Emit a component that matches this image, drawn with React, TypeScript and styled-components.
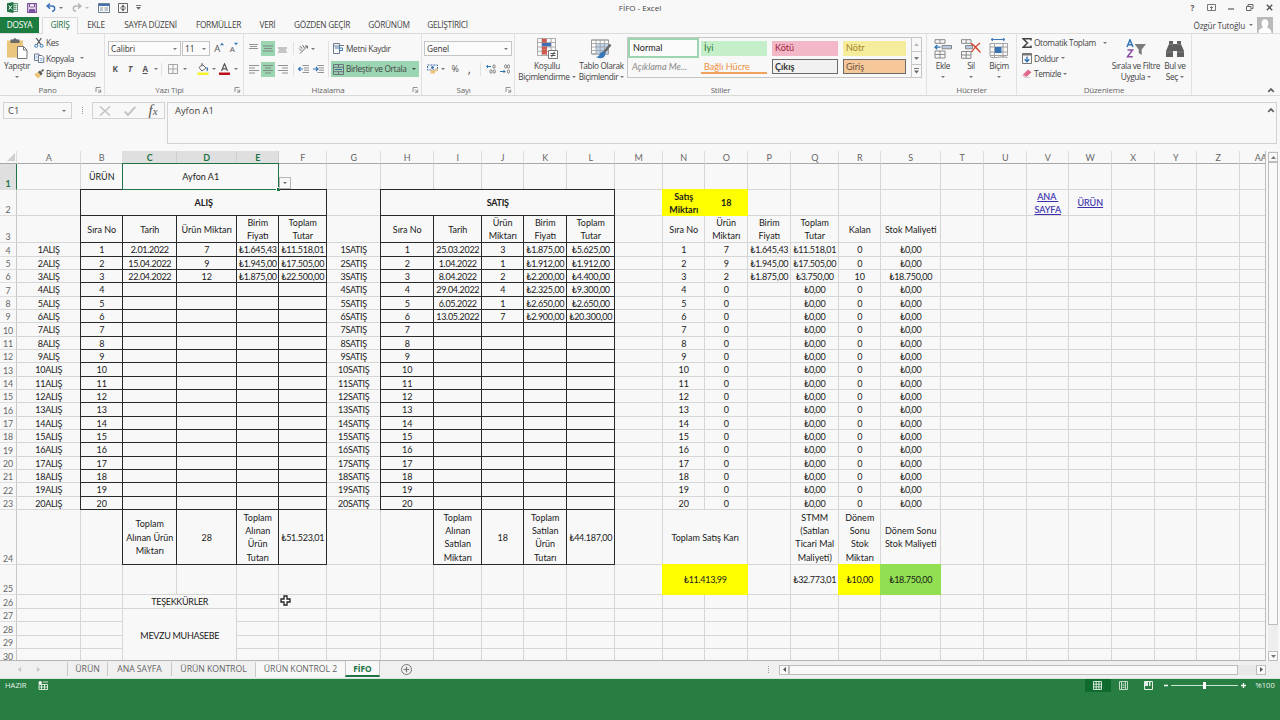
import React from "react";
import styled, { createGlobalStyle, css } from "styled-components";

const UI = `"Open Sans", "Noto Sans", sans-serif`;
const SHEET = `Lato, "Open Sans", sans-serif`;
const GREEN = "#217346";

const Global = createGlobalStyle`
  * { box-sizing: border-box; }
  body { margin: 0; background: #f8f8f8; overflow: hidden; }
  svg { display: block; flex: none; }
`;

const Window = styled.div`
  width: 1280px;
  height: 720px;
  display: flex;
  flex-direction: column;
  background: #f8f8f8;
  color: #444;
  font: 8px/11px ${UI};
  overflow: hidden;
  white-space: nowrap;
`;

/* ---------- shared ---------- */
const Slot = styled.div<{ $w: number; $h?: number; $on?: boolean }>`
  flex: none;
  width: ${(p) => p.$w}px;
  height: ${(p) => (p.$h ? `${p.$h}px` : "auto")};
  display: flex;
  align-items: center;
  justify-content: center;
  background: ${(p) => (p.$on ? "#9bd5b2" : "transparent")};
`;
const Caret = styled.i<{ $ml?: number; $c?: string }>`
  flex: none;
  width: 0;
  height: 0;
  margin-left: ${(p) => p.$ml ?? 0}px;
  border: 2px solid transparent;
  border-top-color: ${(p) => p.$c ?? "#777"};
  border-bottom-width: 0;
`;
const Rule = styled.i<{ $h: number }>`
  width: 1px;
  height: ${(p) => p.$h}px;
  background: #e1e1e1;
`;

/* ---------- title bar ---------- */
const TitleBar = styled.header`
  height: 17px;
  display: grid;
  grid-template-columns: 1fr auto 1fr;
  align-items: start;
`;
const TitleSide = styled.div<{ $end?: boolean }>`
  display: flex;
  height: 15px;
  align-items: center;
  justify-content: ${(p) => (p.$end ? "flex-end" : "flex-start")};
`;
const Title = styled.div`
  height: 16px;
  line-height: 16px;
  font-size: 8px;
`;

/* ---------- ribbon tabs ---------- */
const TabRow = styled.nav`
  height: 17px;
  display: flex;
  position: relative;
  margin-bottom: -1px;
  z-index: 1;
`;
const RibbonTab = styled.div<{ $w: number; $kind?: "file" | "active" }>`
  width: ${(p) => p.$w}px;
  height: 16px;
  display: flex;
  justify-content: center;
  line-height: 16px;
  font-size: 8.3px;
  letter-spacing: -0.3px;
  color: #444;
  ${(p) =>
    p.$kind === "file" &&
    css`
      background: #1d7d40;
      color: #fff;
      margin-right: 3px;
    `}
  ${(p) =>
    p.$kind === "active" &&
    css`
      height: 17px;
      background: #f9f9f9;
      border: 1px solid #dadada;
      border-bottom: 0;
      line-height: 14px;
      color: #217346;
    `}
`;
const Account = styled.div`
  margin-left: auto;
  display: flex;
  align-items: center;
  padding-right: 7px;
  height: 16px;
`;
const UserName = styled.span`
  font-size: 8.2px;
  letter-spacing: -0.2px;
`;

/* ---------- ribbon ---------- */
const Ribbon = styled.section`
  height: 63px;
  flex: none;
  display: flex;
  border-top: 1px solid #dcdcdc;
  border-bottom: 1px solid #d9d9d9;
  font-size: 8.3px;
  letter-spacing: -0.36px;
`;
const Group = styled.div<{ $w: number }>`
  width: ${(p) => p.$w}px;
  flex: none;
  display: flex;
  flex-direction: column;
  border-right: 1px solid #e1e1e1;
`;
const Body = styled.div<{ $pl?: number }>`
  height: 50px;
  display: flex;
  padding-left: ${(p) => p.$pl ?? 0}px;
`;
const Footer = styled.div`
  display: flex;
  align-items: center;
  height: 11px;
  font-size: 8px;
  letter-spacing: -0.2px;
  color: #666;
`;
const FooterName = styled.span`
  flex: 1;
  text-align: center;
`;
const Big = styled.div<{ $w: number; $ml?: number }>`
  width: ${(p) => p.$w}px;
  margin-left: ${(p) => p.$ml ?? 0}px;
  flex: none;
  padding-top: 3px;
  display: flex;
  flex-direction: column;
  align-items: center;
`;
const BigIcon = styled.div`
  height: 23px;
  display: flex;
  align-items: center;
`;
const BigLine = styled.div`
  height: 11px;
  line-height: 12px;
  display: flex;
  align-items: center;
`;
const Stack = styled.div<{ $ml?: number }>`
  display: flex;
  flex-direction: column;
  margin-left: ${(p) => p.$ml ?? 0}px;
  padding-top: 1px;
`;
const Small = styled.div`
  height: 15.5px;
  display: flex;
  align-items: center;
`;
const SmallIcon = styled.div`
  width: 12px;
  display: flex;
`;
const Two = styled.div`
  padding-top: 7px;
  display: flex;
  flex-direction: column;
  gap: 5px;
`;
const Line = styled.div`
  display: flex;
  align-items: center;
  height: 15.5px;
`;
const Combo = styled.div<{ $w: number; $mr?: number }>`
  width: ${(p) => p.$w}px;
  height: 15px;
  margin-right: ${(p) => p.$mr ?? 0}px;
  border: 1px solid #c4c4c4;
  background: #fbfbfb;
  padding: 0 3px 0 2px;
  display: flex;
  align-items: center;
  justify-content: space-between;
  color: #333;
  font-size: 8.3px;
  line-height: 10px;
  letter-spacing: -0.1px;
`;
const Glyph = styled.span<{ $i?: boolean; $u?: boolean; $s?: number }>`
  font-size: ${(p) => p.$s ?? 8}px;
  font-weight: ${(p) => (p.$s ? 500 : 700)};
  font-style: ${(p) => (p.$i ? "italic" : "normal")};
  text-decoration: ${(p) => (p.$u ? "underline" : "none")};
  line-height: 10px;
  color: #555;
`;
const Raised = styled.span`
  align-self: flex-start;
  margin-top: -1px;
`;
const Command = styled.div<{ $on?: boolean }>`
  width: 88px;
  height: 16px;
  line-height: 10px;
  display: flex;
  align-items: center;
  padding-left: 2px;
  gap: 2px;
  background: ${(p) => (p.$on ? "#9bd5b2" : "transparent")};
`;

/* ---------- style gallery ---------- */
const Gallery = styled.div`
  width: 295px;
  height: 41px;
  margin: 3px 0 0 0;
  display: flex;
  border: 1px solid #c6c6c6;
  letter-spacing: 0;
`;
const Swatches = styled.div`
  flex: 1;
  display: grid;
  grid-template-columns: 72px 71px 71px 68px;
  grid-template-rows: 20px 19px;
`;
const Swatch = styled.div<{ $bg?: string; $c: string; $kind?: string }>`
  height: 15px;
  margin: ${(p) => (p.$kind === "selected" ? "0" : "3px 4px 0 1px")};
  padding-left: 3px;
  font: 9.1px/14px ${SHEET};
  background: ${(p) => p.$bg ?? "transparent"};
  color: ${(p) => p.$c};
  ${(p) =>
    p.$kind === "selected" &&
    css`
      height: 20px;
      border: 2px solid #9bd5b2;
      line-height: 16px;
      padding-left: 3px;
      width: 71px;
    `}
  ${(p) => p.$kind === "note" && css`font-style: italic; margin-top: 1px; line-height: 15px;`}
  ${(p) =>
    p.$kind === "linked" &&
    css`
      margin-top: 1px;
      line-height: 15px;
      border-bottom: 2px solid #f2a25c;
    `}
  ${(p) =>
    p.$kind === "box" &&
    css`
      margin-top: 1px;
      border: 1px solid #6b6b6b;
      line-height: 13px;
      padding-left: 2px;
    `}
`;
const Spinner = styled.div`
  width: 10px;
  border-left: 1px solid #c6c6c6;
  display: grid;
  grid-template-rows: 1fr 1fr 1fr;
`;
const SpinnerCell = styled.div`
  display: flex;
  align-items: center;
  justify-content: center;
  & + & {
    border-top: 1px solid #c6c6c6;
  }
`;

/* ---------- formula bar ---------- */
const FormulaBar = styled.section`
  height: 55px;
  flex: none;
  padding: 6px 3px 0 3px;
  display: flex;
  align-items: flex-start;
`;
const Field = styled.div<{ $w: number }>`
  width: ${(p) => p.$w}px;
  height: 17px;
  flex: none;
  border: 1px solid #d2d2d2;
  display: flex;
  align-items: center;
`;
const NameText = styled.span`
  width: 53px;
  padding-left: 4px;
  font-size: 9.4px;
`;
const Dots = styled.div`
  width: 20px;
  height: 17px;
  flex: none;
  display: flex;
  flex-direction: column;
  align-items: center;
  justify-content: center;
  gap: 1px;
  i {
    width: 1px;
    height: 1px;
    background: #999;
  }
`;
const FormulaInput = styled.div`
  flex: 1;
  height: 42px;
  margin-left: 2px;
  border: 1px solid #d2d2d2;
  display: flex;
  justify-content: space-between;
  padding: 2px 1px 0 7px;
  font-size: 9.4px;
  line-height: 12px;
`;
const FormulaToggle = styled.div`
  padding-top: 2px;
`;
const FxMark = styled.span`
  font: italic 11px "Liberation Serif", serif;
  color: #555;
  b {
    font-size: 15px;
    font-weight: 400;
  }
`;

/* ---------- worksheet ---------- */
const COLS = [17, 64, 42, 54, 60, 42, 48, 54, 53, 48, 42, 43, 48, 48, 42, 43, 43, 48, 42, 60, 43, 43, 42, 43, 43, 42, 43, 42];
const NAMES = ["A", "B", "C", "D", "E", "F", "G", "H", "I", "J", "K", "L", "M", "N", "O", "P", "Q", "R", "S", "T", "U", "V", "W", "X", "Y", "Z", "AA"];
const bodyRows = Array.from({ length: 20 }, (_, i) => Math.round(242.4 + (i + 1) * 13.33) - Math.round(242.4 + i * 13.33));
const ROWS = [13, 26, 26, 27, ...bodyRows, 55, 30, 14, 13, 14, 13, 14];

const SheetArea = styled.section`
  height: 510px;
  flex: none;
  display: flex;
`;
const Sheet = styled.div`
  width: 1266px;
  height: 510px;
  position: relative;
  overflow: hidden;
  display: grid;
  grid-template-columns: ${COLS.map((c) => `${c}px`).join(" ")};
  grid-template-rows: ${ROWS.map((r) => `${r}px`).join(" ")};
  border-bottom: 1px solid #b4b4b4;
  border-right: 1px solid #bdbdbd;
  font: 9px/13.3px ${SHEET};
  color: #1a1a1a;
`;
type CellLook = { $c: number; $r: number; $cs?: number; $rs?: number; $box?: boolean; $bg?: string; $b?: boolean; $tight?: boolean };
const Cell = styled.div<CellLook>`
  grid-column: ${(p) => p.$c + 1} / span ${(p) => p.$cs ?? 1};
  grid-row: ${(p) => p.$r + 1} / span ${(p) => p.$rs ?? 1};
  min-width: 0;
  display: flex;
  align-items: center;
  justify-content: center;
  text-align: center;
  white-space: pre;
  padding: 0.6px 0 0 0.5px;
  letter-spacing: ${(p) => (p.$tight ? "-0.3px" : "0")};
  border: 0 solid #d6d6d6;
  border-width: 0 1px 1px 0;
  font-weight: ${(p) => (p.$b ? 700 : 400)};
  ${(p) =>
    p.$box &&
    css`
      margin: -1px 0 0 -1px;
      border: 1px solid #2a2a2a;
    `}
  ${(p) =>
    p.$bg &&
    css`
      margin: -1px 0 0 -1px;
      border: 0;
      background: ${p.$bg};
    `}
`;
const ColHead = styled.div<{ $c: number; $on: boolean }>`
  grid-column: ${(p) => p.$c + 1};
  grid-row: 1;
  border-right: 1px solid ${(p) => (p.$on ? "#cfcfcf" : "#dedede")};
  border-bottom: 1px solid #a8a8a8;
  background: ${(p) => (p.$on ? "#dfdfdf" : "transparent")};
  color: ${(p) => (p.$on ? GREEN : "#666")};
  font-weight: ${(p) => (p.$on ? 700 : 400)};
  text-align: center;
  line-height: 13px;
  padding-left: 0.5px;
  overflow: hidden;
`;
const RowHead = styled.div<{ $r: number; $on: boolean }>`
  grid-column: 1;
  grid-row: ${(p) => p.$r + 1};
  display: flex;
  align-items: flex-end;
  justify-content: center;
  border-bottom: 1px solid #dedede;
  border-right: 1px solid ${(p) => (p.$on ? GREEN : "#c8c8c8")};
  background: ${(p) => (p.$on ? "#dfdfdf" : "transparent")};
  color: ${(p) => (p.$on ? GREEN : "#666")};
  font-weight: ${(p) => (p.$on ? 700 : 400)};
  font-size: 8.8px;
  line-height: 11px;
`;
const Corner = styled.div`
  grid-column: 1;
  grid-row: 1;
  display: flex;
  justify-content: flex-end;
  align-items: flex-end;
  padding: 0 1px 2px 0;
  border-right: 1px solid #dedede;
  border-bottom: 1px solid #a8a8a8;
`;
const Link = styled.a`
  color: #3a30b0;
  text-decoration: underline;
  -webkit-text-stroke: 0.15px #3a30b0;
`;
const Selection = styled.div`
  grid-column: 4 / span 3;
  grid-row: 2;
  position: relative;
  margin: -1px 0 0 -1px;
  border: 1px solid ${GREEN};
  z-index: 2;
`;
const Handle = styled.i`
  position: absolute;
  right: -2px;
  bottom: -2px;
  width: 4px;
  height: 4px;
  background: ${GREEN};
  border: 0 solid #f8f8f8;
  border-width: 1px 0 0 1px;
`;
const DropButton = styled.div`
  position: absolute;
  left: 156px;
  bottom: 0;
  width: 12px;
  height: 12px;
  border: 1px solid #b5b5b5;
  background: #f8f8f8;
  display: flex;
  align-items: center;
  justify-content: center;
`;
const Pointer = styled.svg`
  position: absolute;
  left: 280px;
  top: 444px;
`;

/* ---------- scrollbars ---------- */
const VScroll = styled.div`
  width: 10px;
  margin-left: 2px;
  padding-top: 1px;
  display: flex;
  flex-direction: column;
  background: #eee;
`;
const ScrollButton = styled.div`
  width: 10px;
  height: 10px;
  flex: none;
  border: 1px solid #bdbdbd;
  background: #f9f9f9;
  display: flex;
  align-items: center;
  justify-content: center;
`;
const VThumb = styled.div`
  height: 463px;
  border: 1px solid #bdbdbd;
  background: #f9f9f9;
  margin-bottom: auto;
`;
const HScroll = styled.div`
  width: 487px;
  flex: none;
  margin: 0 0 0 1px;
  display: flex;
  background: #e8e8e8;
`;
const HThumb = styled.div`
  width: 449px;
  height: 10px;
  border: 1px solid #bdbdbd;
  background: #f9f9f9;
  margin-right: auto;
`;

/* ---------- sheet tabs and status bar ---------- */
const Strip = styled.nav`
  height: 17px;
  flex: none;
  display: flex;
  align-items: center;
  background: #f0f0f0;
  font-size: 8.7px;
  letter-spacing: -0.05px;
  color: #666;
`;
const SheetTab = styled.div<{ $w: number; $kind?: "hover" | "active" }>`
  width: ${(p) => p.$w}px;
  flex: none;
  height: 14px;
  align-self: flex-start;
  margin-top: 1px;
  border-left: 1px solid #c9c9c9;
  text-align: center;
  line-height: 15px;
  ${(p) =>
    p.$kind === "hover" &&
    css`
      background: #f8f8f8;
      height: 15px;
    `}
  ${(p) =>
    p.$kind === "active" &&
    css`
      margin-top: -1px;
      height: 17px;
      line-height: 18px;
      background: #f8f8f8;
      border: 1px solid #c4c4c4;
      border-width: 0 1px 0 1px;
      border-bottom: 2px solid ${GREEN};
      color: ${GREEN};
      font-weight: 700;
      font-size: 8.4px;
    `}
`;
const Status = styled.footer`
  flex: 1;
  border-top: 1px solid #d5e6da;
  background: #277d42;
  color: #e8f3eb;
  font-size: 7.6px;
`;
const StatusRow = styled.div`
  height: 13px;
  display: flex;
  align-items: center;
`;
const StatusText = styled.span<{ $w: number; $pl: number }>`
  width: ${(p) => p.$w}px;
  padding-left: ${(p) => p.$pl}px;
`;
const Zoom = styled.div`
  width: 67px;
  height: 8px;
  display: flex;
  align-items: center;
  justify-content: center;
  background: linear-gradient(#cfe3d5, #cfe3d5) center / 100% 1px no-repeat;
  i {
    width: 3px;
    height: 7px;
    background: #fff;
  }
`;
const ViewButton = styled.div<{ $on?: boolean }>`
  width: 25.5px;
  height: 13px;
  flex: none;
  display: flex;
  align-items: center;
  justify-content: center;
  background: ${(p) => (p.$on ? "#0f6b2d" : "transparent")};
`;

/* ---------- icons ---------- */
type IconProps = { w: number; h: number; children: React.ReactNode; s?: string };
const Svg = ({ w, h, children, s = "#777" }: IconProps) => (
  <svg width={w} height={h} viewBox={`0 0 ${w} ${h}`} fill="none" stroke={s} strokeWidth="1">
    {children}
  </svg>
);
const Launcher = () => (
  <Svg w={9} h={6}>
    <path d="M1 5V.5h4.500M3 2.500l2.500 2.500M5.700 2.500v2.700H3" strokeWidth=".8" />
  </Svg>
);
const ExcelIcon = () => (
  <Svg w={11} h={11} s="none">
    <path d="M5 1.500h5.500v8H5z" fill="#fff" stroke="#217346" strokeWidth=".7" />
    <path d="M6.500 3.200h3M6.500 5.200h3M6.500 7.200h3" stroke="#217346" />
    <path d="M0 1.200L6.500 0v11L0 9.800z" fill="#217346" />
    <path d="M1.800 3.500l3 4M4.800 3.500l-3 4" stroke="#fff" />
  </Svg>
);
const SaveIcon = () => (
  <Svg w={10} h={10} s="#7d51a0">
    <path d="M.7.700h8.600v8.600H.7z" strokeWidth="1.300" />
    <path d="M2.500 1v3h5V1" />
    <path d="M2.500 9V6.300h5V9z" fill="#7d51a0" />
  </Svg>
);
const Undo = ({ flip, c }: { flip?: boolean; c: string }) => (
  <svg width="10" height="9" viewBox="0 0 10 9" fill="none" stroke={c} strokeWidth="1.400">
    <g transform={flip ? "translate(10 0) scale(-1 1)" : undefined}>
      <path d="M4 .5L1 3l3 2.600M1.200 3H6c3.600 0 3.600 5 0 5.300" />
    </g>
  </svg>
);
const FormIcon = () => (
  <Svg w={12} h={10} s="#6c7f94">
    <path d="M.5.500h11v9H.5z" />
    <path d="M.5 2h11" stroke="#4274b0" strokeWidth="2" />
    <path d="M2 5h3M2 7h3M6.500 5H10M6.500 7H10" strokeWidth=".8" />
  </Svg>
);
const TouchIcon = () => (
  <Svg w={10} h={10} s="#666">
    <path d="M.5.500h9v9h-9z" />
    <path d="M5 1.500L6.800 4H3.200zM5 8.500L6.800 6H3.200z" fill="#555" stroke="none" />
    <path d="M2 5h6" />
  </Svg>
);
const PasteIcon = () => (
  <Svg w={21} h={21} s="none">
    <path d="M0 2.500h16v17H0z" fill="#eac67c" />
    <path d="M3.500 1.500h2.500L8 0l2 1.500h2.500V5h-9z" fill="#6a6a6a" />
    <path d="M10.500 8.500h6l3.500 3.500v8.500h-9.500z" fill="#fff" stroke="#777" />
    <path d="M16.500 8.500V12H20" stroke="#777" />
  </Svg>
);
const Scissors = () => (
  <Svg w={10} h={10} s="#555">
    <path d="M2.200 0l4.600 6.500M7.300 0L3 6.500" strokeWidth="1.200" />
    <circle cx="2.200" cy="7.800" r="1.500" stroke="#3f7ab8" />
    <circle cx="7.600" cy="7.800" r="1.500" stroke="#3f7ab8" />
  </Svg>
);
const CopyIcon = () => (
  <Svg w={11} h={10} s="#6b7c8f">
    <path d="M.5 1h4.500v6.500H.5z" fill="#fff" />
    <path d="M4.500 2.500H8L9.800 4.300v5.200H4.500z" fill="#fff" />
    <path d="M5.800 5.500h2.800M5.800 7.300h2.800M1.500 3.200h2M1.500 5h2" strokeWidth=".7" stroke="#4c88c4" />
  </Svg>
);
const BrushIcon = () => (
  <Svg w={10} h={10} s="none">
    <path d="M0 5.500L4 3l3 3.500L4 9.500z" fill="#edc577" />
    <path d="M4 3l2-1.500 2.500 3L7 6.500z" fill="#555" />
    <path d="M7.500 2.500l2-2" stroke="#555" strokeWidth="1.600" />
  </Svg>
);
const BordersIcon = () => (
  <Svg w={10} h={10} s="#a5a5a5">
    <path d="M.5.500h9v9h-9zM5 .5v9M.5 5h9" />
  </Svg>
);
const FillIcon = () => (
  <Svg w={12} h={12} s="#666">
    <path d="M2 4.500L5.500 1.500l3.500 3.500-4 3z" fill="#fff" />
    <path d="M5 0v3.500" />
    <path d="M9.800 4.500c1 1.500 1 3-.3 3" stroke="#3f7ab8" strokeWidth="1.400" />
    <path d="M.5 9.500h11v2.500H.5z" fill="#f7f32b" stroke="none" />
  </Svg>
);
const AlignIcon = ({ l }: { l: number[][] }) => (
  <Svg w={10} h={9} s="#777">
    <path d={l.map(([x, y, w]) => `M${x} ${y}h${w}`).join("")} strokeWidth=".8" />
  </Svg>
);
const V_TOP = [[0, 0.5, 9], [1, 2.5, 7], [0, 4.5, 9]];
const V_MID = [[0, 2, 10], [1, 4.5, 8], [0, 7, 10]];
const V_BOT = [[0, 4, 9], [1, 6, 7], [0, 8, 9]];
const H_L = [[0, 0.5, 10], [0, 3, 6], [0, 5.5, 10], [0, 8, 6]];
const H_C = [[0, 0.5, 10], [2, 3, 6], [0, 5.5, 10], [2, 8, 6]];
const H_R = [[0, 0.5, 10], [4, 3, 6], [0, 5.5, 10], [4, 8, 6]];
const OrientIcon = () => (
  <Svg w={11} h={10} s="#666">
    <path d="M2 9.500L9.500 2M9.500 2H7M9.500 2v2.500" />
    <path d="M1 4.500l2.500 2.500M1.500 3c2-1 3 1 2 2M4.500 1l2 3" strokeWidth=".9" />
  </Svg>
);
const IndentIcon = ({ flip }: { flip?: boolean }) => (
  <Svg w={11} h={8} s="#777">
    <path d="M4.500.500H11M6 2.900h5M6 5.200h5M4.500 7.500H11" strokeWidth=".8" />
    <path d={flip ? "M0 4h4.500M3 2l2 2-2 2" : "M5 4H.5M2.500 2l-2 2 2 2"} stroke="#2f74b5" strokeWidth="1.200" />
  </Svg>
);
const WrapIcon = () => (
  <Svg w={11} h={11} s="#6b7c8f">
    <path d="M.5.500h6v10h-6zM.5 3h6" />
    <path d="M2 5h7.500v2.500H6" stroke="#3f7ab8" />
    <path d="M7 2.500h4" />
  </Svg>
);
const MergeIcon = () => (
  <Svg w={11} h={11} s="#667">
    <path d="M.5.500h10v10H.5zM.5 3.300h10M.5 7.700h10M5.500.500v2.800M5.500 7.700v2.800" strokeWidth=".9" />
    <path d="M2 5.500h7" stroke="#3f6a8f" />
  </Svg>
);
const MoneyIcon = () => (
  <Svg w={11} h={10} s="#3f6fa8">
    <path d="M.5 1h10v5H.5z" fill="#eef3fa" strokeDasharray="2 1" />
    <circle cx="5.500" cy="3.500" r="1" fill="#3f6fa8" />
    <path d="M3.500 6h4.500v3.500H3.500z" fill="#ecc278" stroke="none" />
    <path d="M8.500 4.500h2v3h-2z" fill="#ecc278" stroke="none" />
  </Svg>
);
const Decimal = ({ less }: { less?: boolean }) => (
  <Svg w={10} h={10} s="#666">
    {less ? (
      <>
        <ellipse cx="5.700" cy="2.500" rx="1.100" ry="1.700" strokeWidth=".8" />
        <ellipse cx="8.500" cy="2.500" rx="1.100" ry="1.700" strokeWidth=".8" />
        <ellipse cx="8.500" cy="7.500" rx="1.100" ry="1.700" strokeWidth=".8" />
        <path d="M0 7.500h5M3.500 6l1.500 1.500L3.500 9" stroke="#2f74b5" />
      </>
    ) : (
      <>
        <ellipse cx="8" cy="2.500" rx="1.100" ry="1.700" strokeWidth=".8" />
        <ellipse cx="5" cy="7.500" rx="1.100" ry="1.700" strokeWidth=".8" />
        <ellipse cx="8.300" cy="7.500" rx="1.100" ry="1.700" strokeWidth=".8" />
        <path d="M5 2.500H.5M2 1L.5 2.500 2 4" stroke="#2f74b5" />
      </>
    )}
  </Svg>
);
const ConditionalIcon = () => (
  <Svg w={21} h={21} s="#999">
    <path d="M.5.500h18v17H.5zM5 .5v17M9.500.500v17M14 .5v17M.5 4.500h18M.5 9h18M.5 13.200h18" strokeWidth=".8" />
    <path d="M5 .8h4.500v4H5zM5 12h5v4.500H5z" fill="#cf5a50" stroke="none" />
    <path d="M5 5h9v3.300H5z" fill="#3d6fb4" stroke="none" />
    <path d="M5 8.500h5v3.300H5z" fill="#cf5a50" stroke="none" />
    <path d="M11.500 12.500h9v8h-9z" fill="#fff" stroke="#777" />
    <path d="M13.500 15.500h5M13.500 17.500h5M17.500 13.800l-3 5.400" stroke="#444" strokeWidth=".9" />
  </Svg>
);
const TableIcon = () => (
  <Svg w={21} h={20} s="#9a9a9a">
    <path d="M.5 1h17v14H.5z" fill="#fff" />
    <path d="M5 5h12.500v10H5z" fill="#bdd5ec" stroke="none" />
    <path d="M.5 1h17v14H.5zM5 1v14M9.200 1v14M13.400 1v14M.5 4.500h17M.5 8h17M.5 11.500h17" strokeWidth=".8" />
    <path d="M19.500 5.500l-7 8.500" stroke="#666" strokeWidth="2.400" />
    <path d="M12 12.500c-4 1-2.500 5-7 5.500 4 2.500 9 1.500 9.500-3.500z" fill="#3878b8" stroke="none" />
  </Svg>
);
const InsertIcon = () => (
  <Svg w={18} h={20} s="#888">
    <path d="M1 .7h10v3.600H1zM6 .7v3.600M1 12h10v7H1zM6 12v7M1 15.500h10" />
    <path d="M8 6.500h9.500v3.300H8z" fill="#b8cde4" />
    <path d="M6.500 8.200H1M3.300 6L1 8.200l2.300 2.200" stroke="#2f74b5" strokeWidth="1.300" />
  </Svg>
);
const DeleteIcon = () => (
  <Svg w={20} h={20} s="#888">
    <path d="M.5.700h9.500v3.600H.5zM5.200.700v3.600M.5 12.500H10v6.800H.5zM5.200 12.500v6.800M.5 16H10" />
    <path d="M4.500 6.500h7v3.300h-7z" fill="#b8cde4" />
    <path d="M10 4.500c3 1.500 6 5 9.500 9M19 4c-3 2-6 5-8.500 9" stroke="#d2472f" strokeWidth="1.400" />
  </Svg>
);
const FormatIcon = () => (
  <Svg w={20} h={21} s="#999">
    <path d="M2 1.500h14M4 0L2 1.500 4 3M14 0l2 1.500L14 3" stroke="#3f7ab8" />
    <path d="M1 5.500h17.500v12H1zM5.500 5v15M14 5v15M1 9h17.500M1 14h17.500" strokeWidth=".9" />
    <path d="M6 9h6.500v6H6z" fill="#3674b5" stroke="none" />
    <path d="M1 18.500c4 3 10-1 17.500 1" />
  </Svg>
);
const SigmaIcon = () => (
  <Svg w={10} h={10} s="#444">
    <path d="M9 2.500V.8H1.200L5.500 5 1.200 9.200H9V7.500" strokeWidth="1.500" />
  </Svg>
);
const FillDownIcon = () => (
  <Svg w={10} h={11} s="#777">
    <path d="M.5.500h9v10h-9z" />
    <path d="M.5 1.500h9" strokeWidth="2" />
    <path d="M5 3.500v5M2.700 6.300L5 8.700l2.300-2.400" stroke="#2f74b5" strokeWidth="1.300" />
  </Svg>
);
const EraserIcon = () => (
  <Svg w={10} h={9} s="none">
    <path d="M1 5.500L6 .5l3.500 2.700L4.500 8z" fill="#e0698c" />
    <path d="M1 5.500L4.500 8H2L0 6.500z" fill="#f2b6c7" />
    <path d="M2.500 8.500H8" stroke="#bbb" strokeWidth=".6" />
  </Svg>
);
const SortIcon = () => (
  <Svg w={20} h={19} s="none">
    <path d="M1 8L4 .8 7 8M2 5.800h4" stroke="#3674b5" strokeWidth="1.500" />
    <path d="M1.500 11h5l-5 6.700h5.300" stroke="#8a4fa3" strokeWidth="1.500" />
    <path d="M8.500 5H20l-4.300 5.500v5.500l-3-2v-3.500z" fill="#7b7b7b" />
  </Svg>
);
const BinocularsIcon = () => (
  <Svg w={18} h={16} s="none">
    <path d="M3 0h4v3h4V0h4v3l3 7v6h-7v-6H7v6H0v-6l3-7z" fill="#5f5f5f" />
    <path d="M3 3.200h4M11 3.200h4M0 11h7M11 11h7" stroke="#8d8d8d" strokeWidth=".7" />
  </Svg>
);
const Chevron = () => (
  <Svg w={8} h={6} s="#666">
    <path d="M1.200 4.800L4 2l2.800 2.800" strokeWidth="1.800" />
  </Svg>
);
const Tri = ({ d, c = "#777", z = 5 }: { d: "l" | "r" | "u" | "d"; c?: string; z?: number }) => (
  <svg width={z} height={z} viewBox="0 0 5 5" fill={c}>
    <path d={{ l: "M4 0v5L1 2.500z", r: "M1 0v5l3-2.500z", u: "M0 4h5L2.500 1z", d: "M0 1h5L2.500 4z" }[d]} />
  </svg>
);

/* ---------- sheet contents ---------- */
type Entry = { t?: React.ReactNode; cs?: number; rs?: number; box?: boolean; bg?: string; b?: boolean };
const col = (n: string) => NAMES.indexOf(n) + 1;
const cells: Record<string, Entry> = {};
const put = (c: string, r: number, e: Entry) => {
  cells[`${col(c)}:${r}`] = e;
};
const YELLOW = "#ffff00";

put("B", 1, { t: "ÜRÜN" });
put("C", 1, { t: "Ayfon A1", cs: 3 });
put("B", 2, { t: "ALIŞ", cs: 5, box: true, b: true });
put("H", 2, { t: "SATIŞ", cs: 5, box: true, b: true });
put("N", 2, { t: "Satış\nMiktarı", bg: YELLOW, b: true });
put("O", 2, { t: "18", bg: YELLOW, b: true });
put("V", 2, { t: <Link>{"ANA \nSAYFA"}</Link> });
put("W", 2, { t: <Link>ÜRÜN</Link> });
[["B", "Sıra No"], ["C", "Tarih"], ["D", "Ürün Miktarı"], ["E", "Birim\nFiyatı"], ["F", "Toplam\nTutar"],
 ["H", "Sıra No"], ["I", "Tarih"], ["J", "Ürün\nMiktarı"], ["K", "Birim\nFiyatı"], ["L", "Toplam\nTutar"],
].forEach(([c, t]) => put(c, 3, { t, box: true }));
[["N", "Sıra No"], ["O", "Ürün\nMiktarı"], ["P", "Birim\nFiyatı"], ["Q", "Toplam\nTutar"], ["R", "Kalan"], ["S", "Stok Maliyeti"],
].forEach(([c, t]) => put(c, 3, { t }));

const purchases = [
  ["2.01.2022", "7", "₺1.645,43", "₺11.518,01"],
  ["15.04.2022", "9", "₺1.945,00", "₺17.505,00"],
  ["22.04.2022", "12", "₺1.875,00", "₺22.500,00"],
];
const sales = [
  ["25.03.2022", "3", "₺1.875,00", "₺5.625,00"],
  ["1.04.2022", "1", "₺1.912,00", "₺1.912,00"],
  ["8.04.2022", "2", "₺2.200,00", "₺4.400,00"],
  ["29.04.2022", "4", "₺2.325,00", "₺9.300,00"],
  ["6.05.2022", "1", "₺2.650,00", "₺2.650,00"],
  ["13.05.2022", "7", "₺2.900,00", "₺20.300,00"],
];
const stock = [
  ["7", "₺1.645,43", "₺11.518,01", "0", "₺0,00"],
  ["9", "₺1.945,00", "₺17.505,00", "0", "₺0,00"],
  ["2", "₺1.875,00", "₺3.750,00", "10", "₺18.750,00"],
];
for (let i = 0; i < 20; i++) {
  const r = i + 4;
  put("A", r, { t: `${i + 1}ALIŞ` });
  put("B", r, { t: `${i + 1}`, box: true });
  put("G", r, { t: `${i + 1}SATIŞ` });
  put("H", r, { t: `${i + 1}`, box: true });
  put("N", r, { t: `${i + 1}` });
  ["C", "D", "E", "F"].forEach((c, k) => put(c, r, { t: purchases[i]?.[k], box: true }));
  ["I", "J", "K", "L"].forEach((c, k) => put(c, r, { t: sales[i]?.[k], box: true }));
  const line = stock[i] ?? ["0", "", "₺0,00", "0", "₺0,00"];
  ["O", "P", "Q", "R", "S"].forEach((c, k) => put(c, r, { t: line[k] }));
}
[["C", "Toplam\nAlınan Ürün\nMiktarı"], ["D", "28"], ["E", "Toplam\nAlınan\nÜrün\nTutarı"], ["F", "₺51.523,01"],
 ["I", "Toplam\nAlınan\nSatılan\nMiktarı"], ["J", "18"], ["K", "Toplam\nSatılan\nÜrün\nTutarı"], ["L", "₺44.187,00"],
].forEach(([c, t]) => put(c, 24, { t, box: true }));
put("N", 24, { t: "Toplam Satış Karı", cs: 2 });
put("Q", 24, { t: "STMM\n(Satılan\nTicari Mal\nMaliyeti)" });
put("R", 24, { t: "Dönem\nSonu\nStok\nMiktarı" });
put("S", 24, { t: "Dönem Sonu\nStok Maliyeti" });
put("N", 25, { t: "₺11.413,99", cs: 2, bg: YELLOW });
put("Q", 25, { t: "₺32.773,01" });
put("R", 25, { t: "₺10,00", bg: YELLOW });
put("S", 25, { t: "₺18.750,00", bg: "#92e052" });
put("C", 26, { t: "TEŞEKKÜRLER", cs: 2 });
put("C", 27, { t: "MEVZU MUHASEBE", cs: 2, rs: 4 });

/* amounts, dates and all-capital labels are set a little tighter */
const isTight = (t: React.ReactNode) => typeof t === "string" && ((/[₺.]/.test(t) && !t.includes("\n")) || /^[\dA-ZÜŞİ ]{5,}$/.test(t));

const Cells = () => {
  const covered = new Set<string>();
  const out: React.ReactNode[] = [];
  for (let r = 1; r <= 30; r++) {
    for (let c = 1; c <= 27; c++) {
      const key = `${c}:${r}`;
      if (covered.has(key)) continue;
      const e = cells[key] ?? {};
      for (let y = 0; y < (e.rs ?? 1); y++)
        for (let x = 0; x < (e.cs ?? 1); x++) covered.add(`${c + x}:${r + y}`);
      out.push(
        <Cell key={key} $c={c} $r={r} $cs={e.cs} $rs={e.rs} $box={e.box} $bg={e.bg} $b={e.b} $tight={isTight(e.t)}>
          {e.t}
        </Cell>
      );
    }
  }
  return <>{out}</>;
};

const TABS: [string, number][] = [
  ["EKLE", 36], ["SAYFA DÜZENİ", 73], ["FORMÜLLER", 63], ["VERİ", 35], ["GÖZDEN GEÇİR", 74], ["GÖRÜNÜM", 60], ["GELİŞTİRİCİ", 57],
];

const GroupFooter = ({ name, launch }: { name: string; launch?: boolean }) => (
  <Footer>
    <FooterName>{name}</FooterName>
    {launch && <Launcher />}
  </Footer>
);

export default function App() {
  return (
    <Window>
      <Global />
      <TitleBar>
        <TitleSide>
          <Slot $w={24}><ExcelIcon /></Slot>
          <Slot $w={15}><SaveIcon /></Slot>
          <Slot $w={24}><Undo c="#3b74b8" /></Slot>
          <Caret $ml={-4} />
          <Slot $w={28}><Undo flip c="#b5b5b5" /></Slot>
          <Caret $ml={-6} $c="#bbb" />
          <Slot $w={29}><FormIcon /></Slot>
          <Slot $w={9}><TouchIcon /></Slot>
          <Slot $w={22}>
            <Svg w={5} h={5}><path d="M0 .5h5" /><path d="M0 2h5L2.500 4.700z" fill="#666" stroke="none" /></Svg>
          </Slot>
        </TitleSide>
        <Title>FİFO - Excel</Title>
        <TitleSide $end>
          <Slot $w={9}><Glyph>?</Glyph></Slot>
          <Slot $w={28}>
            <Svg w={9} h={7} s="#666"><path d="M.5.500h8v6h-8zM4.500 6V2.500M3 4l1.500-1.500L6 4" strokeWidth=".9" /></Svg>
          </Slot>
          <Slot $w={11}><Svg w={6} h={5} s="#666"><path d="M0 4h6" strokeWidth="1.300" /></Svg></Slot>
          <Slot $w={27}>
            <Svg w={8} h={7} s="#666"><path d="M.5 2.500h4.500v4H.5zM2 2.500v-2h5v4H5.500" /></Svg>
          </Slot>
          <Slot $w={13}><Svg w={7} h={7} s="#555"><path d="M.8.800l5.400 5.400M6.200.800L.8 6.200" strokeWidth="1.400" /></Svg></Slot>
          <Slot $w={4} />
        </TitleSide>
      </TitleBar>

      <TabRow>
        <RibbonTab $w={39} $kind="file">DOSYA</RibbonTab>
        <RibbonTab $w={36} $kind="active">GİRİŞ</RibbonTab>
        {TABS.map(([t, w]) => <RibbonTab key={t} $w={w}>{t}</RibbonTab>)}
        <Account>
          <UserName>Özgür Tutoğlu</UserName>
          <Slot $w={12}><Caret /></Slot>
          <Svg w={16} h={16} s="none">
            <path d="M0 0h16v16H0z" fill="#b9b9b9" />
            <path d="M1.500 16c0-4 2.500-4.500 4.500-5.500C3.500 7 4.500 2.300 8 2.300s4.500 4.700 2 8.200c2 1 4.500 1.500 4.500 5.500z" fill="#fff" />
          </Svg>
        </Account>
      </TabRow>

      <Ribbon>
        <Group $w={105}>
          <Body>
            <Big $w={34}>
              <BigIcon><PasteIcon /></BigIcon>
              <BigLine>Yapıştır</BigLine>
              <BigLine><Caret /></BigLine>
            </Big>
            <Stack>
              <Small><SmallIcon><Scissors /></SmallIcon>Kes</Small>
              <Small><SmallIcon><CopyIcon /></SmallIcon>Kopyala<Caret $ml={6} /></Small>
              <Small><SmallIcon><BrushIcon /></SmallIcon>Biçim Boyacısı</Small>
            </Stack>
          </Body>
          <GroupFooter name="Pano" launch />
        </Group>

        <Group $w={139}>
          <Body $pl={3}>
            <Two>
              <Line>
                <Combo $w={73} $mr={1}>Calibri<Caret /></Combo>
                <Combo $w={28}>11<Caret /></Combo>
                <Slot $w={18} $h={12}><Glyph $s={9.5}>A</Glyph><Raised><Tri d="u" c="#3674b5" z={4} /></Raised></Slot>
                <Slot $w={12} $h={12}><Glyph $s={8}>A</Glyph><Raised><Tri d="d" c="#3674b5" z={4} /></Raised></Slot>
              </Line>
              <Line>
                <Slot $w={14}><Glyph>K</Glyph></Slot>
                <Slot $w={16}><Glyph $i>T</Glyph></Slot>
                <Slot $w={14}><Glyph $u>A</Glyph></Slot>
                <Slot $w={8}><Caret /></Slot>
                <Slot $w={3}><Rule $h={13} /></Slot>
                <Slot $w={20}><BordersIcon /></Slot>
                <Slot $w={4}><Caret /></Slot>
                <Slot $w={8} />
                <Slot $w={16}><FillIcon /></Slot>
                <Slot $w={5}><Caret /></Slot>
                <Slot $w={17}>
                  <Svg w={11} h={12} s="#555">
                    <path d="M2.500 8L5.500.800 8.500 8M3.500 5.800h4" strokeWidth="1.200" />
                    <path d="M0 9.500h11V12H0z" fill="#c00f1c" stroke="none" />
                  </Svg>
                </Slot>
                <Slot $w={5}><Caret /></Slot>
              </Line>
            </Two>
          </Body>
          <GroupFooter name="Yazı Tipi" launch />
        </Group>

        <Group $w={178}>
          <Body $pl={2}>
            <Two>
              <Line>
                <Slot $w={15}><AlignIcon l={V_TOP} /></Slot>
                <Slot $w={14} $h={15} $on><AlignIcon l={V_MID} /></Slot>
                <Slot $w={15}><AlignIcon l={V_BOT} /></Slot>
                <Slot $w={6}><Rule $h={13} /></Slot>
                <Slot $w={14}><OrientIcon /></Slot>
                <Slot $w={6}><Caret /></Slot>
              </Line>
              <Line>
                <Slot $w={15}><AlignIcon l={H_L} /></Slot>
                <Slot $w={14} $h={15} $on><AlignIcon l={H_C} /></Slot>
                <Slot $w={15}><AlignIcon l={H_R} /></Slot>
                <Slot $w={6}><Rule $h={13} /></Slot>
                <Slot $w={15}><IndentIcon /></Slot>
                <Slot $w={15}><IndentIcon flip /></Slot>
              </Line>
            </Two>
            <Slot $w={5}><Rule $h={36} /></Slot>
            <Two>
              <Line><Command><WrapIcon />Metni Kaydır</Command></Line>
              <Line><Command $on><MergeIcon />Birleştir ve Ortala<Caret $ml={4} $c="#444" /></Command></Line>
            </Two>
          </Body>
          <GroupFooter name="Hizalama" launch />
        </Group>

        <Group $w={93}>
          <Body $pl={2}>
            <Two>
              <Line><Combo $w={88}>Genel<Caret /></Combo></Line>
              <Line>
                <Slot $w={16}><MoneyIcon /></Slot>
                <Slot $w={6}><Caret /></Slot>
                <Slot $w={18}><Glyph $s={9}>%</Glyph></Slot>
                <Slot $w={10}><Glyph $s={12}>,</Glyph></Slot>
                <Slot $w={12}><Rule $h={13} /></Slot>
                <Slot $w={9}><Decimal /></Slot>
                <Slot $w={20}><Decimal less /></Slot>
              </Line>
            </Two>
          </Body>
          <GroupFooter name="Sayı" launch />
        </Group>

        <Group $w={412}>
          <Body>
            <Big $w={58} $ml={3}>
              <BigIcon><ConditionalIcon /></BigIcon>
              <BigLine>Koşullu</BigLine>
              <BigLine>Biçimlendirme<Caret $ml={2} /></BigLine>
            </Big>
            <Big $w={51}>
              <BigIcon><TableIcon /></BigIcon>
              <BigLine>Tablo Olarak</BigLine>
              <BigLine>Biçimlendir<Caret $ml={2} /></BigLine>
            </Big>
            <Gallery>
              <Swatches>
                <Swatch $kind="selected" $c="#222" $bg="#fbfbfb">Normal</Swatch>
                <Swatch $c="#2c7a33" $bg="#c5efc9">İyi</Swatch>
                <Swatch $c="#9c1c38" $bg="#f3b8c8">Kötü</Swatch>
                <Swatch $c="#a5822a" $bg="#f5ec9c">Nötr</Swatch>
                <Swatch $kind="note" $c="#888">Açıklama Me...</Swatch>
                <Swatch $kind="linked" $c="#ec8f3e">Bağlı Hücre</Swatch>
                <Swatch $kind="box" $c="#333" $bg="#f1f1f1"><b>Çıkış</b></Swatch>
                <Swatch $kind="box" $c="#6b5442" $bg="#f5c799">Giriş</Swatch>
              </Swatches>
              <Spinner>
                <SpinnerCell><Tri d="u" c="#bbb" /></SpinnerCell>
                <SpinnerCell><Tri d="d" /></SpinnerCell>
                <SpinnerCell>
                  <Svg w={5} h={6}><path d="M0 .5h5" /><path d="M0 2.500h5L2.500 5.500z" fill="#666" stroke="none" /></Svg>
                </SpinnerCell>
              </Spinner>
            </Gallery>
          </Body>
          <GroupFooter name="Stiller" />
        </Group>

        <Group $w={90}>
          <Body $pl={2}>
            <Big $w={28}><BigIcon><InsertIcon /></BigIcon><BigLine>Ekle</BigLine><BigLine><Caret /></BigLine></Big>
            <Big $w={28}><BigIcon><DeleteIcon /></BigIcon><BigLine>Sil</BigLine><BigLine><Caret /></BigLine></Big>
            <Big $w={28}><BigIcon><FormatIcon /></BigIcon><BigLine>Biçim</BigLine><BigLine><Caret /></BigLine></Big>
          </Body>
          <GroupFooter name="Hücreler" />
        </Group>

        <Group $w={175}>
          <Body $pl={5}>
            <Stack>
              <Small><SmallIcon><SigmaIcon /></SmallIcon>Otomatik Toplam<Caret $ml={7} /></Small>
              <Small><SmallIcon><FillDownIcon /></SmallIcon>Doldur<Caret $ml={2} /></Small>
              <Small><SmallIcon><EraserIcon /></SmallIcon>Temizle<Caret $ml={2} /></Small>
            </Stack>
            <Big $w={50} $ml={4}>
              <BigIcon><SortIcon /></BigIcon>
              <BigLine>Sırala ve Filtre</BigLine>
              <BigLine>Uygula<Caret $ml={2} /></BigLine>
            </Big>
            <Big $w={28}>
              <BigIcon><BinocularsIcon /></BigIcon>
              <BigLine>Bul ve</BigLine>
              <BigLine>Seç<Caret $ml={2} /></BigLine>
            </Big>
          </Body>
          <GroupFooter name="Düzenleme" />
        </Group>
        <Slot $w={79} />
        <Stack>
          <Slot $w={8} $h={49} />
          <Slot $w={0} $h={11}><Chevron /></Slot>
        </Stack>
      </Ribbon>

      <FormulaBar>
        <Field $w={69}><NameText>C1</NameText><Slot $w={14}><Caret /></Slot></Field>
        <Dots><i /><i /><i /><i /></Dots>
        <Field $w={73}>
          <Slot $w={24}><Svg w={12} h={10} s="#c3c3c3"><path d="M1 .5l10 9M11 .5l-10 9" strokeWidth="1.500" /></Svg></Slot>
          <Slot $w={25}><Svg w={12} h={10} s="#c3c3c3"><path d="M.7 5.500L4 9 11.300.800" strokeWidth="2" /></Svg></Slot>
          <Slot $w={22}><FxMark><b>f</b>x</FxMark></Slot>
        </Field>
        <FormulaInput>Ayfon A1<FormulaToggle><Chevron /></FormulaToggle></FormulaInput>
      </FormulaBar>

      <SheetArea>
        <Sheet>
          <Corner><Svg w={8} h={8} s="none"><path d="M8 0v8H0z" fill="#cfcfcf" /></Svg></Corner>
          {NAMES.map((n, i) => <ColHead key={n} $c={i + 1} $on={i >= 2 && i <= 4}>{n}</ColHead>)}
          {ROWS.slice(1).map((_, i) => <RowHead key={i} $r={i + 1} $on={i === 0}>{i + 1}</RowHead>)}
          <Cells />
          <Selection>
            <Handle />
            <DropButton><Caret $c="#666" /></DropButton>
          </Selection>
          <Pointer width="11" height="11" viewBox="0 0 11 11">
            <path d="M4 1h3v3h3v3H7v3H4V7H1V4h3z" fill="#fff" stroke="#222" strokeWidth="1.300" />
          </Pointer>
        </Sheet>
        <VScroll>
          <ScrollButton><Tri d="u" /></ScrollButton>
          <VThumb />
          <ScrollButton><Tri d="d" /></ScrollButton>
        </VScroll>
      </SheetArea>

      <Strip>
        <Slot $w={38}><Tri d="l" c="#c2c2c2" /></Slot>
        <Slot $w={0}><Tri d="r" c="#c2c2c2" /></Slot>
        <Slot $w={29} />
        <SheetTab $w={40}>ÜRÜN</SheetTab>
        <SheetTab $w={64}>ANA SAYFA</SheetTab>
        <SheetTab $w={84}>ÜRÜN KONTROL</SheetTab>
        <SheetTab $w={90} $kind="hover">ÜRÜN KONTROL 2</SheetTab>
        <SheetTab $w={35} $kind="active">FİFO</SheetTab>
        <Slot $w={53}>
          <Svg w={11} h={11}><circle cx="5.500" cy="5.500" r="5" /><path d="M5.500 2.700v5.600M2.700 5.500h5.600" strokeWidth="1.200" /></Svg>
        </Slot>
        <Slot $w={325} />
        <Dots><i /><i /><i /><i /></Dots>
        <HScroll>
          <ScrollButton><Tri d="l" c="#555" /></ScrollButton>
          <HThumb />
          <ScrollButton><Tri d="r" c="#555" /></ScrollButton>
        </HScroll>
      </Strip>

      <Status>
        <StatusRow>
          <StatusText $w={38} $pl={5}>HAZIR</StatusText>
          <Svg w={10} h={9} s="#e4f0e7">
            <path d="M1 3.500h8.500v5H1zM3.500 3.500v5M6.500 3.500v5M1 6h8.500M5 1h5" strokeWidth=".9" />
            <circle cx="2.200" cy="1.700" r="1.700" fill="#fff" stroke="none" />
          </Svg>
          <Slot $w={1037} />
          <ViewButton $on>
            <Svg w={9} h={9} s="#e4f0e7"><path d="M.5.500h8v8h-8zM3.200.500v8M5.900.500v8M.5 3.200h8M.5 5.900h8" strokeWidth=".9" /></Svg>
          </ViewButton>
          <ViewButton>
            <Svg w={9} h={9} s="#d4e6d9"><path d="M.5.500h8v8h-8zM2.500 1v7.500M6.500 1v7.500M3.500 3h2M3.500 4.800h2M3.500 6.500h2" strokeWidth=".9" /></Svg>
          </ViewButton>
          <ViewButton>
            <Svg w={9} h={9} s="#e4f0e7"><path d="M.5.500h8v8h-8z" /><path d="M1 1h3v4H1zM5 1h1.500v4H5z" fill="#e4f0e7" stroke="none" /></Svg>
          </ViewButton>
          <Slot $w={9}><Svg w={4} h={3} s="#fff"><path d="M0 1.500h4" strokeWidth="1.500" /></Svg></Slot>
          <Zoom><i /></Zoom>
          <Slot $w={11}><Svg w={5} h={5} s="#fff"><path d="M0 2.500h5M2.500 0v5" strokeWidth="1.300" /></Svg></Slot>
          <StatusText $w={30} $pl={7}>%100</StatusText>
        </StatusRow>
      </Status>
    </Window>
  );
}
